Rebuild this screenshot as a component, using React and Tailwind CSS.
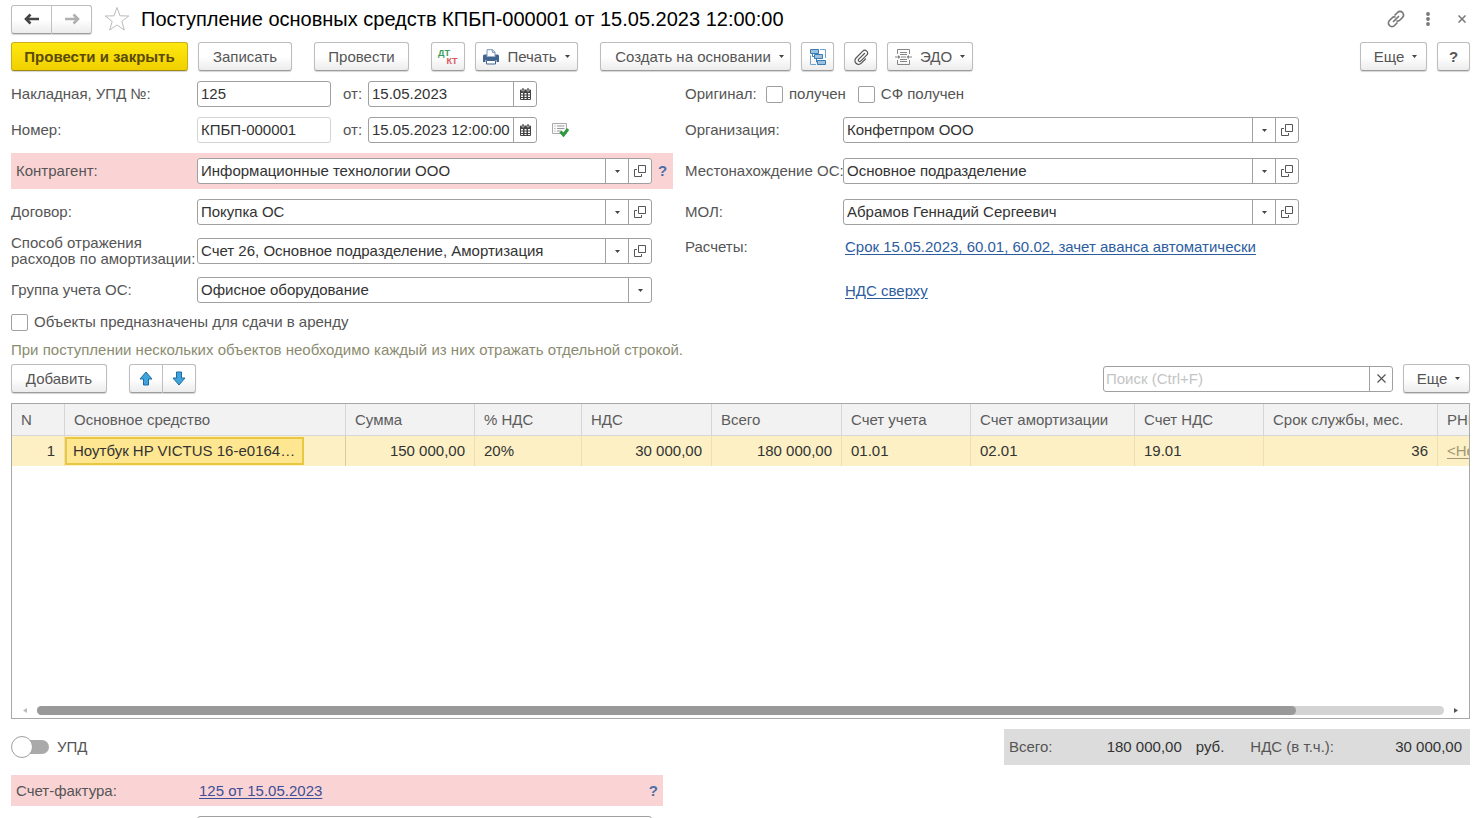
const combosLeft = {
  contract: { id: "contract", label: "Договор:", value: "Покупка ОС" },
  expense: { id: "expense", value: "Счет 26, Основное подразделение, Амортизация" },
};

const columns = [
  { title: "N", width: "w-[53px]" },
  { title: "Основное средство", width: "w-[281px]" },
  { title: "Сумма", width: "w-[129px]" },
  { title: "% НДС", width: "w-[107px]" },
  { title: "НДС", width: "w-[130px]" },
  { title: "Всего", width: "w-[130px]" },
  { title: "Счет учета", width: "w-[129px]" },
  { title: "Счет амортизации", width: "w-[164px]" },
  { title: "Счет НДС", width: "w-[129px]" },
  { title: "Срок службы, мес.", width: "w-[174px]" },
  { title: "РНПТ", width: "w-[180px]" },
];

const rows = [
  {
    n: 1,
    asset: "Ноутбук HP VICTUS 16-e0164…",
    sum: "150 000,00",
    rate: "20%",
    vat: "30 000,00",
    total: "180 000,00",
    account: "01.01",
    depreciation: "02.01",
    vatAccount: "19.01",
    months: 36,
    rnpt: "<Не требуется>",
  },
];

const buttonBase =
  "flex items-center justify-center h-[29px] shrink-0 whitespace-nowrap border border-[#bdbdbd] border-b-[#9c9c9c] bg-gradient-to-b from-white from-50% to-[#ececec] text-[#555] shadow-[0_1px_1px_#d4d4d4]";

function Button({ className = "", children, ...props }) {
  return (
    <button type="button" className={`${buttonBase} rounded-[3px] ${className}`} {...props}>
      {children}
    </button>
  );
}

function SmallCaret() {
  return (
    <svg className="w-[5px] h-[3px] shrink-0" viewBox="0 0 5 3" fill="#444">
      <path d="M0 0h5L2.5 3z" />
    </svg>
  );
}

function OpenIcon() {
  return (
    <svg className="w-3 h-3" viewBox="0 0 12 12" fill="none" stroke="#555">
      <path d="M4.5 0.5h7v7h-7z" />
      <path d="M3 4.5H0.5v7h7V9" />
    </svg>
  );
}

function CalendarIcon() {
  return (
    <svg className="w-[11px] h-3" viewBox="0 0 11 12">
      <path d="M1 1.5h9a1 1 0 011 1V11a1 1 0 01-1 1H1a1 1 0 01-1-1V2.500a1 1 0 011-1z" fill="#444" />
      <path d="M2 0h2v3H2zM7 0h2v3H7z" fill="#444" stroke="#fff" strokeWidth="0.500" />
      <path d="M1 5h2v1.500h-2zM4.500 5h2v1.500h-2zM8 5h2v1.500h-2zM1 7.500h2V9h-2zM4.500 7.500h2V9h-2zM8 7.500h2V9h-2zM1 10h2v1h-2zM4.500 10h2v1h-2zM8 10h2v1h-2z" fill="#fff" />
    </svg>
  );
}

function ArrowIcon({ className = "", flip }) {
  return (
    <svg className={`w-4 h-3 ${className}`} viewBox="0 0 16 12" fill="none" stroke="currentColor" strokeWidth="2.600">
      {flip ? <path d="M1 6h13M9.500 1.500L14 6l-4.500 4.500" /> : <path d="M15 6H2M6.500 1.500L2 6l4.500 4.500" />}
    </svg>
  );
}

function MoveIcon({ down }) {
  return (
    <svg className="w-[14px] h-[15px]" viewBox="0 0 14 15" fill="#3fa4dc" stroke="#1d6c9f" strokeLinejoin="round">
      {down ? (
        <path d="M4.500 1h5v6h3.500L7 14 1 7h3.500z" />
      ) : (
        <path d="M4.500 14h5V8h3.500L7 1 1 8h3.500z" />
      )}
    </svg>
  );
}

function PrinterIcon() {
  return (
    <svg className="w-4 h-4" viewBox="0 0 16 16">
      <path d="M4 7V0.700h5.500L12 3.200V7" fill="#fff" stroke="#7693b5" />
      <path d="M9.300 0.700v2.700H12" fill="none" stroke="#7693b5" />
      <path d="M1.500 5.500h2.200v2h8.600v-2h2.200A1.500 1.500 0 0116 7v6h-2.500v-2h-11v2H0V7a1.500 1.500 0 011.500-1.500z" fill="#41658f" />
      <path d="M3.500 11.500h9v3.500h-9z" fill="#fff" stroke="#41658f" />
    </svg>
  );
}

function StructureIcon() {
  return (
    <svg className="w-4 h-4" viewBox="0 0 16 16" fill="#9cc2e0" stroke="#3b7db3">
      <path d="M10 0.500h5.500V9M0.500 6.500v9H6" fill="none" stroke="#6fa3cd" />
      <path d="M2.500 4v3.500h2M6.500 9v4h2" fill="none" />
      <path d="M0.500 0.500h8v4h-8zM4.500 5.500h8v4h-8zM7.500 11.500h8v4h-8z" />
    </svg>
  );
}

function PaperclipIcon() {
  return (
    <svg className="w-4 h-4" viewBox="0 0 16 16" fill="none" stroke="#555" strokeWidth="1.200" strokeLinecap="round">
      <path d="M11.500 4.500L5.800 10.200a1.300 1.300 0 001.900 1.900l6-6a2.700 2.700 0 00-3.900-3.900L3 9a3.700 3.700 0 005.300 5.200l4.200-4.200" />
    </svg>
  );
}

function EdoIcon() {
  return (
    <svg className="w-[17px] h-4" viewBox="0 0 17 16" fill="none" stroke="#858585">
      <path d="M2.500 5V0.500h12V5M2.500 11v4.500h12V11" />
      <path d="M5 3.500h7M5 5.500h7M6 8h5M5 10.500h7M5 12.500h7" />
      <path d="M0 8h5M12 8h5" />
      <path d="M3 6l2.500 2L3 10zM14 6l-2.500 2 2.500 2z" fill="#858585" stroke="none" />
    </svg>
  );
}

function PostedIcon() {
  return (
    <svg className="w-[17px] h-[14px]" viewBox="0 0 17 14" fill="none">
      <path d="M0.500 0.500h14v10H0.500z" fill="#fafafa" stroke="#aaa" />
      <path d="M2.500 3h1M5 3h7.500M2.500 5.500h1M5 5.500h7.500M2.500 8h1M5 8h4" stroke="#999" />
      <path d="M8.500 8.500l3 3.500L16 6" stroke="#2c9a3c" strokeWidth="3" />
    </svg>
  );
}

const fieldBox = "flex h-[26px] rounded-[3px] border border-[#a0a0a0] bg-white text-[#333]";
const cellButton = "flex w-[23px] shrink-0 items-center justify-center border-l border-[#a0a0a0]";

function Combo({ id, value, open = true, className = "flex-1" }) {
  return (
    <div className={`${fieldBox} min-w-0 ${className}`}>
      <div className="relative flex min-w-0 flex-1">
        <select id={id} className="w-full appearance-none bg-transparent pl-[3px] pr-6 outline-none">
          <option>{value}</option>
        </select>
        <span className={`${cellButton} pointer-events-none absolute inset-y-0 right-0`}>
          <SmallCaret />
        </span>
      </div>
      {open && (
        <button type="button" aria-label="Открыть" className={cellButton}>
          <OpenIcon />
        </button>
      )}
    </div>
  );
}

function DateField({ id, value }) {
  return (
    <div className={`${fieldBox} w-[169px]`}>
      <input id={id} type="text" defaultValue={value} className="w-0 flex-1 pl-[3px] outline-none" />
      <button type="button" aria-label="Выбрать дату" className={cellButton}>
        <CalendarIcon />
      </button>
    </div>
  );
}

function Checkbox({ label, className = "" }) {
  return (
    <label className={`flex items-center gap-[6px] ${className}`}>
      <input type="checkbox" className="h-[17px] w-[17px] appearance-none rounded-[2px] border border-[#a0a0a0] bg-white checked:bg-[#888]" />
      {label}
    </label>
  );
}

function Header() {
  return (
    <header className="flex h-7 items-center">
      <div className="flex">
        <button type="button" aria-label="Назад" className={`${buttonBase} w-[41px] rounded-l-[3px]`}>
          <ArrowIcon className="text-[#444]" />
        </button>
        <button type="button" aria-label="Вперед" className={`${buttonBase} w-10 rounded-r-[3px] border-l-0`}>
          <ArrowIcon flip className="text-[#b0b0b0]" />
        </button>
      </div>
      <button type="button" aria-label="В избранное" className="ml-3">
        <svg className="h-[26px] w-[26px]" viewBox="0 0 26 26" fill="none" stroke="#bbb">
          <path d="M13 1.500l3 8.300 8.800 0.200-7 5.400 2.500 8.600L13 19l-7.300 5 2.500-8.600-7-5.400 8.800-0.200z" />
        </svg>
      </button>
      <h1 className="ml-[11px] text-xl leading-6 text-black">
        Поступление основных средств КПБП-000001 от 15.05.2023 12:00:00
      </h1>
      <div className="ml-auto flex items-center text-[#777]">
        <button type="button" aria-label="Ссылка">
          <svg className="h-[18px] w-[18px]" viewBox="0 0 18 18" fill="none" stroke="currentColor" strokeWidth="1.700" strokeLinecap="round">
            <path d="M8 5l2.500-2.500a3.500 3.500 0 015 5L13 10a3.500 3.500 0 01-3 1" />
            <path d="M10 13l-2.500 2.500a3.500 3.500 0 01-5-5L5 8a3.500 3.500 0 013-1" />
            <path d="M6.500 11.500l5-5" />
          </svg>
        </button>
        <button type="button" aria-label="Меню" className="ml-[21px]">
          <svg className="h-[14px] w-1" viewBox="0 0 4 14" fill="currentColor">
            <circle cx="2" cy="2" r="1.900" />
            <circle cx="2" cy="7" r="1.900" />
            <circle cx="2" cy="12" r="1.900" />
          </svg>
        </button>
        <button type="button" aria-label="Закрыть" className="ml-7 mr-1">
          <svg className="h-2 w-2" viewBox="0 0 8 8" stroke="currentColor" strokeWidth="1.500">
            <path d="M0.500 0.500l7 7M7.500 0.500l-7 7" />
          </svg>
        </button>
      </div>
    </header>
  );
}

function Toolbar() {
  return (
    <div className="mt-[9px] flex gap-[10px]">
      <button
        type="button"
        className="h-[29px] w-[177px] shrink-0 whitespace-nowrap rounded-[3px] border border-[#c9ad1a] border-b-[#a08a10] bg-gradient-to-b from-[#ffe80f] to-[#f0d000] font-bold text-[#5a4a05] shadow-[0_1px_1px_#d4d4d4]"
      >
        Провести и закрыть
      </button>
      <Button className="w-[94px]">Записать</Button>
      <Button className="ml-3 w-[95px]">Провести</Button>
      <Button className="ml-3 w-[34px]" aria-label="Проводки">
        <span className="flex flex-col text-[9px] leading-[8px] font-bold">
          <span className="pr-2 text-[#3c9c62]">ДТ</span>
          <span className="pl-2 text-[#d9595c]">КТ</span>
        </span>
      </Button>
      <Button className="w-[103px] gap-2">
        <PrinterIcon />
        Печать
        <SmallCaret />
      </Button>
      <Button className="ml-3 w-[191px] gap-2 pl-2">
        Создать на основании
        <SmallCaret />
      </Button>
      <Button className="w-[33px]" aria-label="Структура подчиненности">
        <StructureIcon />
      </Button>
      <Button className="w-[33px]" aria-label="Файлы">
        <PaperclipIcon />
      </Button>
      <Button className="w-[86px] gap-2">
        <EdoIcon />
        ЭДО
        <SmallCaret />
      </Button>
      <Button className="ml-auto w-[67px] gap-2 pl-1">
        Еще
        <SmallCaret />
      </Button>
      <Button className="w-[33px] font-bold" aria-label="Справка">
        ?
      </Button>
    </div>
  );
}

function LeftFields() {
  return (
    <div className="flex w-[662px] shrink-0 flex-col gap-[10px]">
      <div className="flex items-center">
        <label htmlFor="invoice" className="w-[186px]">Накладная, УПД №:</label>
        <div className={`${fieldBox} w-[134px]`}>
          <input id="invoice" type="text" defaultValue="125" className="w-full pl-[3px] outline-none" />
        </div>
        <label htmlFor="invoice-date" className="ml-3 w-[25px]">от:</label>
        <DateField id="invoice-date" value="15.05.2023" />
      </div>
      <div className="flex items-center">
        <label htmlFor="number" className="w-[186px]">Номер:</label>
        <div className="flex h-[26px] w-[134px] rounded-[3px] border border-[#d4d4d4] text-[#333]">
          <input id="number" type="text" readOnly defaultValue="КПБП-000001" className="w-full pl-[3px] outline-none" />
        </div>
        <label htmlFor="number-date" className="ml-3 w-[25px]">от:</label>
        <DateField id="number-date" value="15.05.2023 12:00:00" />
        <span className="ml-[15px]"><PostedIcon /></span>
      </div>
      <div className="flex h-9 items-center bg-[#fad4d5] pl-[5px]">
        <label htmlFor="partner" className="w-[181px]">Контрагент:</label>
        <Combo id="partner" value="Информационные технологии ООО" className="w-[455px]" />
        <button type="button" aria-label="Подсказка" className="ml-[6px] font-bold text-[#4a6fa8]">?</button>
      </div>
      <div className="flex items-center">
        <label htmlFor={combosLeft.contract.id} className="w-[186px]">{combosLeft.contract.label}</label>
        <Combo {...combosLeft.contract} className="w-[455px]" />
      </div>
      <div className="flex items-center">
        <label htmlFor={combosLeft.expense.id} className="w-[186px] whitespace-nowrap leading-4">
          Способ отражения
          <br />
          расходов по амортизации:
        </label>
        <Combo {...combosLeft.expense} className="w-[455px]" />
      </div>
      <div className="flex items-center">
        <label htmlFor="group" className="w-[186px]">Группа учета ОС:</label>
        <Combo id="group" value="Офисное оборудование" open={false} className="w-[455px]" />
      </div>
    </div>
  );
}

function RightFields() {
  return (
    <div className="flex w-[614px] flex-col">
      <div className="flex h-[26px] items-center">
        <span className="w-[81px]">Оригинал:</span>
        <Checkbox label="получен" />
        <Checkbox label="СФ получен" className="ml-3" />
      </div>
      <div className="mt-[10px] flex items-center">
        <label htmlFor="org" className="w-[158px] shrink-0">Организация:</label>
        <Combo id="org" value="Конфетпром ООО" />
      </div>
      <div className="mt-[15px] flex items-center">
        <label htmlFor="place" className="w-[158px] shrink-0 whitespace-nowrap">Местонахождение ОС:</label>
        <Combo id="place" value="Основное подразделение" />
      </div>
      <div className="mt-[15px] flex items-center">
        <label htmlFor="mol" className="w-[158px] shrink-0">МОЛ:</label>
        <Combo id="mol" value="Абрамов Геннадий Сергеевич" />
      </div>
      <div className="mt-[13px] flex">
        <span className="w-40 shrink-0">Расчеты:</span>
        <a href="#payments" className="whitespace-nowrap text-[#2d5d9f] underline underline-offset-2">
          Срок 15.05.2023, 60.01, 60.02, зачет аванса автоматически
        </a>
      </div>
      <div className="mt-[26px] flex pl-40">
        <a href="#vat" className="text-[#2d5d9f] underline underline-offset-2">НДС сверху</a>
      </div>
    </div>
  );
}

function ListToolbar() {
  return (
    <div className="mt-[5px] flex items-center">
      <Button className="w-24">Добавить</Button>
      <div className="ml-[22px] flex">
        <button type="button" aria-label="Переместить вверх" className={`${buttonBase} w-[34px] rounded-l-[3px]`}>
          <MoveIcon />
        </button>
        <button type="button" aria-label="Переместить вниз" className={`${buttonBase} w-[33px] rounded-r-[3px] border-l-0`}>
          <MoveIcon down />
        </button>
      </div>
      <div className={`${fieldBox} ml-auto w-[290px]`}>
        <input
          type="text"
          aria-label="Поиск"
          placeholder="Поиск (Ctrl+F)"
          className="w-0 flex-1 pl-[2px] outline-none placeholder:text-[#c4c4c4]"
        />
        <button type="button" aria-label="Очистить" className={cellButton}>
          <svg className="h-[9px] w-[9px]" viewBox="0 0 9 9" stroke="#555" strokeWidth="1.200">
            <path d="M0.500 0.500l8 8M8.500 0.500l-8 8" />
          </svg>
        </button>
      </div>
      <Button className="ml-[10px] w-[67px] gap-2 pl-1">
        Еще
        <SmallCaret />
      </Button>
    </div>
  );
}

function AssetsTable() {
  const cell = "border-r border-[#eee0b0] px-[9px]";
  return (
    <div className="mt-[10px] flex min-h-40 flex-1 flex-col overflow-hidden border border-[#a8a8a8]">
      <div className="flex-1 overflow-hidden">
        <table className="w-[1606px] table-fixed border-separate border-spacing-0">
          <thead>
            <tr className="h-8 bg-[#f2f2f2] text-left text-[#5c5c5c]">
              {columns.map((col) => (
                <th key={col.title} className={`${col.width} border-r border-b border-[#d6d6d6] px-[9px] font-normal whitespace-nowrap`}>
                  {col.title}
                </th>
              ))}
            </tr>
          </thead>
          <tbody>
            {rows.map((row) => (
              <tr key={row.n} className="h-[30px] bg-[#fcf0c4] text-[#333]">
                <td className={`${cell} text-right`}>{row.n}</td>
                <td className="border-r border-[#d9cc98] p-0">
                  <div className="flex h-[28px] w-[239px] items-center border-2 border-[#e8c843] bg-[#ffe791] pl-[6px] whitespace-nowrap">
                    {row.asset}
                  </div>
                </td>
                <td className={`${cell} text-right`}>{row.sum}</td>
                <td className={cell}>{row.rate}</td>
                <td className={`${cell} text-right`}>{row.vat}</td>
                <td className={`${cell} text-right`}>{row.total}</td>
                <td className={cell}>{row.account}</td>
                <td className={cell}>{row.depreciation}</td>
                <td className={cell}>{row.vatAccount}</td>
                <td className={`${cell} text-right`}>{row.months}</td>
                <td className={`${cell} whitespace-nowrap`}>
                  <a href="#rnpt" className="text-[#a09878] underline underline-offset-2">{row.rnpt}</a>
                </td>
              </tr>
            ))}
          </tbody>
        </table>
      </div>
      <div className="flex h-4 items-center px-[11px] text-[#555]">
        <svg className="h-[5px] w-1" viewBox="0 0 4 5" fill="#bbb">
          <path d="M4 0v5L0 2.500z" />
        </svg>
        <div className="mx-[10px] h-[9px] flex-1 rounded-full bg-[#d4d4d4]">
          <div className="h-full w-[89.5%] rounded-full bg-[#999]" />
        </div>
        <svg className="h-[5px] w-1" viewBox="0 0 4 5" fill="currentColor">
          <path d="M0 0v5l4-2.500z" />
        </svg>
      </div>
    </div>
  );
}

function Footer() {
  return (
    <footer>
      <div className="mt-[10px] flex h-9 items-center justify-between">
        <label className="flex items-center gap-2">
          <input type="checkbox" className="peer sr-only" />
          <span className="flex h-[22px] w-[38px] items-center">
            <span className="z-10 h-[22px] w-[22px] shrink-0 rounded-full border border-[#a0a0a0] bg-white" />
            <span className="-ml-3 h-[14px] w-7 rounded-full bg-[#aaa]" />
          </span>
          УПД
        </label>
        <div className="flex h-full w-[466px] items-center bg-[#dcdcdc] pr-2 pl-[5px] whitespace-nowrap">
          <span>Всего:</span>
          <span className="flex-1 text-right text-[#333]">180 000,00</span>
          <span className="ml-[14px] text-[#333]">руб.</span>
          <span className="ml-[26px]">НДС (в т.ч.):</span>
          <span className="w-[128px] text-right text-[#333]">30 000,00</span>
        </div>
      </div>
      <div className="mt-[10px] flex h-[31px] w-[652px] items-center bg-[#fad4d5] pr-[5px] pl-[5px]">
        <span className="w-[183px]">Счет-фактура:</span>
        <a href="#invoice" className="text-[#3d4f96] underline underline-offset-2">125 от 15.05.2023</a>
        <button type="button" aria-label="Подсказка" className="ml-auto font-bold text-[#4a6fa8]">?</button>
      </div>
      <div className="mt-[10px] flex h-[2px] overflow-hidden pl-[186px]">
        <input type="text" aria-label="Комментарий" className={`${fieldBox} w-[455px] shrink-0 outline-none`} />
      </div>
    </footer>
  );
}

export default function App() {
  return (
    <main className="flex h-screen flex-col overflow-hidden bg-white px-[10px] pt-[5px] pl-[11px] font-['Liberation_Sans',Arial,sans-serif] text-[15px] leading-[18px] text-[#555]">
      <Header />
      <Toolbar />
      <div className="mt-[10px] flex gap-3">
        <LeftFields />
        <RightFields />
      </div>
      <Checkbox label="Объекты предназначены для сдачи в аренду" className="mt-[10px]" />
      <p className="mt-[10px] text-[#8b8b70]">
        При поступлении нескольких объектов необходимо каждый из них отражать отдельной строкой.
      </p>
      <ListToolbar />
      <AssetsTable />
      <Footer />
    </main>
  );
}
